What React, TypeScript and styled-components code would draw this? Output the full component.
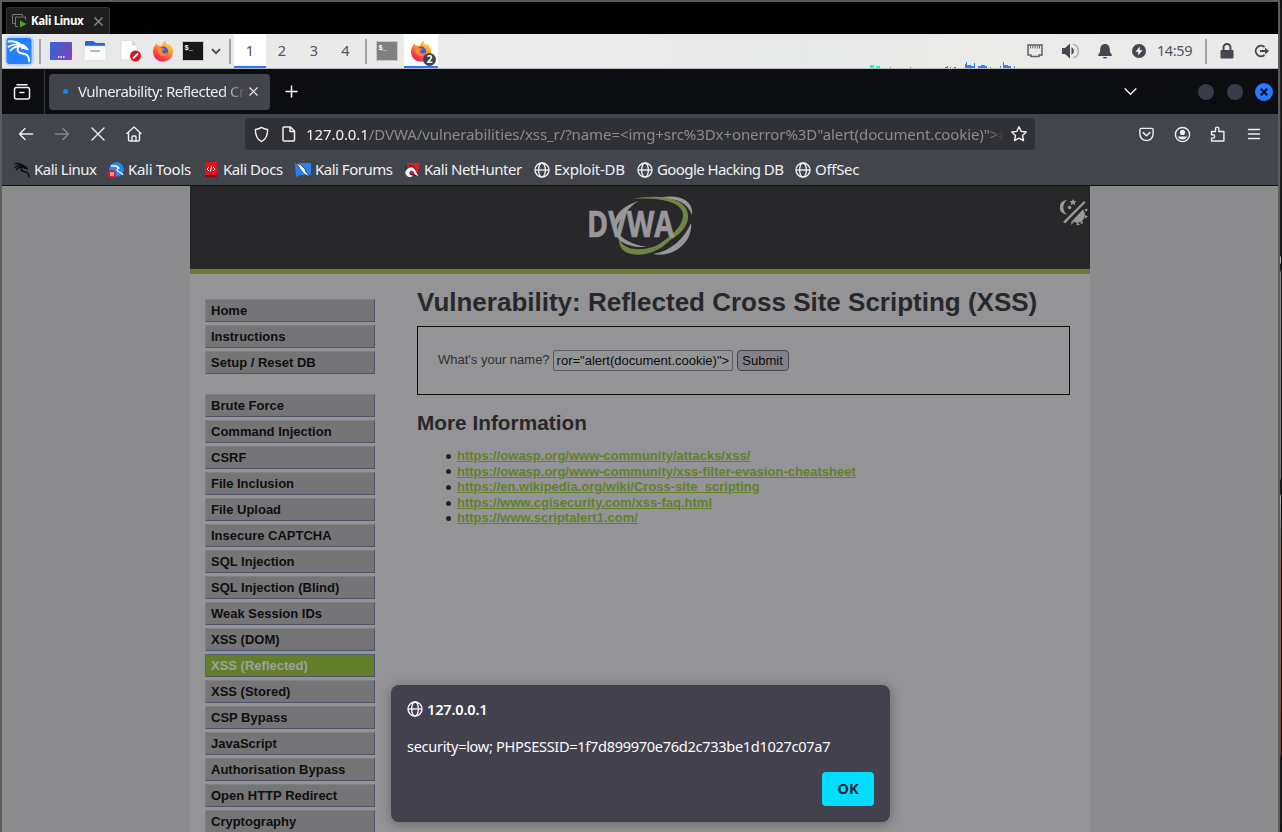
import React from "react";
import styled, { createGlobalStyle } from "styled-components";

const Global = createGlobalStyle`
  * { box-sizing: border-box; }
  html, body { margin: 0; padding: 0; background: #000; overflow: hidden; }
  svg { display: block; flex: none; }
`;

const ui = `"Noto Sans", "Open Sans", sans-serif`;
const web = `"Liberation Sans", Arial, sans-serif`;

const Screen = styled.div`
  width: 1282px; height: 832px; overflow: hidden; display: flex;
  background: #5c5c5c; font-family: ${ui}; padding: 2px 0 0 2px;
`;
const Desktop = styled.div`
  position: relative; width: 1276px; height: 830px; display: flex; flex-direction: column; overflow: hidden;
`;
const RightEdge = styled.div`
  width: 2px; margin: -2px 0 0 2px; height: 832px; border-right: 1px solid #111;
  background: linear-gradient(180deg, #1a1a1a 0, #2a2c28 120px, #1c1c1c 256px, #aaa 257px, #aaa 263px, #222 264px, #322 270px, #8a8a88 273px, #777 479px, #222 480px, #222 494px, #b0b0ae 496px, #777468 535px, #8a5a3c 575px, #8a5a3c 660px, #6e3f28 755px, #222 757px, #1b1b1b 832px);
`;

/* virtual machine tab strip */
const VmBar = styled.div`
  height: 32px; background: #000; display: flex; align-items: flex-end; padding-left: 4px; flex: none;
`;
const VmTab = styled.div`
  width: 104px; height: 27px; background: #1f1f1f; border: 1px solid #333; border-bottom: 0; border-radius: 3px 3px 0 0;
  display: flex; align-items: center; color: #fff; font-weight: 700; padding-left: 5px;
`;
const VmTitle = styled.span`
  font-size: 11.5px; letter-spacing: -0.35px; margin-left: 3px; width: 63px; white-space: nowrap; padding-bottom: 1px;
`;

/* desktop panel */
const Panel = styled.div`
  height: 35px; background: linear-gradient(90deg, #e8e8ea 0%, #ebebea 45%, #e6e9e8 63%, #ebebe8 75%, #e9e9ea 100%);
  border-bottom: 1px solid #b9b9bb; display: flex; flex: none; color: #50545d;
`;
const Slot = styled.div<{ $w: number; $active?: boolean }>`
  width: ${p => p.$w}px; height: 34px; flex: none; display: flex; align-items: center; justify-content: center;
  position: relative; background: ${p => (p.$active ? "#fff" : "transparent")};
  border-bottom: ${p => (p.$active ? "2px solid #2777ff" : "0")}; padding-top: ${p => (p.$active ? 2 : 0)}px;
  font-size: 15px; white-space: nowrap;
`;
const PanelText = styled.span<{ $ls?: number }>`
  font-size: 14.5px; line-height: 20px; padding-bottom: 2px; letter-spacing: ${p => p.$ls ?? 0}px;
`;
const PanelRule = styled.i`width: 2px; height: 25px; background: #a3a3a8;`;
const Spacer = styled.div<{ $w?: number }>`
  ${p => (p.$w ? `width: ${p.$w}px; flex: none;` : "flex: 1;")}
`;
const GraphSlot = styled.div`width: 146px; display: flex; align-items: flex-end;`;
const Badge = styled.span`
  position: absolute; right: 2px; bottom: 0; width: 13px; height: 13px; border-radius: 50%; background: #3c4452;
  color: #fff; font-size: 10px; line-height: 13px; font-weight: 700; text-align: center;
`;

/* browser chrome */
const TabBar = styled.div`
  height: 45px; background: #0c0d11; display: flex; align-items: center; flex: none; color: #f0f0f2;
`;
const ViewCell = styled.div`
  width: 43px; height: 44px; border-right: 1px solid #37393e; display: flex; align-items: center; justify-content: center; padding-right: 2px;
`;
const Tab = styled.div`
  width: 221px; height: 36px; margin: 0 0 0 4px; border-radius: 4px; background: #42444c; display: flex; align-items: center; padding-left: 14px;
`;
const Dot = styled.i`width: 5px; height: 5px; border-radius: 50%; background: #0a84ff; margin-right: 10px;`;
const TabTitle = styled.span`
  width: 168px; overflow: hidden; white-space: nowrap; font-size: 15px; letter-spacing: -0.53px; color: #ececee; padding-bottom: 2px;
  mask-image: linear-gradient(90deg, #000 86%, transparent 100%);
`;
const WinButton = styled.i<{ $close?: boolean }>`
  width: ${p => (p.$close ? 18 : 16)}px; height: ${p => (p.$close ? 18 : 16)}px; border-radius: 50%;
  background: ${p => (p.$close ? "#2777ff" : "#363c4a")}; display: flex; align-items: center; justify-content: center;
`;
const WinButtons = styled.div`
  display: flex; align-items: center; gap: 12px; width: 80px;
  & > :nth-child(2) { margin-left: 1px; }
`;
const NavBar = styled.div`
  height: 40px; background: #43454d; display: flex; align-items: center; flex: none; color: #eeeef0;
`;
const UrlBar = styled.div`
  width: 790px; height: 32px; border-radius: 4px; background: #303136; display: flex; align-items: center; padding-left: 8px;
`;
const UrlText = styled.div`
  width: 698px; margin-left: 8px; overflow: hidden; white-space: nowrap; font-size: 15px; color: #8b8c90; letter-spacing: -0.085px;
  mask-image: linear-gradient(90deg, #000 97.8%, transparent 100%);
`;
const Host = styled.span`color: #f3f3f5;`;
const Bookmarks = styled.div`
  height: 32px; background: #43454d; border-bottom: 1px solid #101114; display: flex; align-items: center; flex: none; color: #f0f0f2;
  padding: 0 0 0 12px;
`;
const Bookmark = styled.div<{ $w: number }>`
  width: ${p => p.$w}px; flex: none; display: flex; align-items: center; gap: 4px; font-size: 15px;
`;
const BookmarkName = styled.span<{ $ls: number }>`
  white-space: nowrap; line-height: 20px; padding-bottom: 2px; letter-spacing: ${p => p.$ls}px;
`;

/* DVWA page */
const Page = styled.div`
  flex: 1; min-height: 0; background: #8c8c8e; font-family: ${web}; font-size: 13px; display: flex; justify-content: center;
`;
const Container = styled.div`width: 900px; background: #949496; display: flex; flex-direction: column; color: #28282a; height: 646px; overflow: hidden;`;
const Header = styled.header`
  height: 88px; flex: none; background: #28282a; border-bottom: 5px solid #687f2b; display: flex; justify-content: flex-end; padding: 8px 2px 0 0;
`;
const LogoSlot = styled.div`width: 108px; margin-right: 358px;`;
const ThemeSlot = styled.div`padding: 2px 0 0 7px;`;
const Columns = styled.div`display: flex; padding-left: 15px;`;
const Menu = styled.nav`width: 170px; padding-top: 25px; flex: none;`;
const MenuGroup = styled.div`display: flex; flex-direction: column; gap: 3px; margin-bottom: 20px;`;
const MenuItem = styled.div<{ $active?: boolean }>`
  height: 23px; line-height: 21px; padding-left: 5px; font-weight: 700; font-size: 13px; flex: none;
  color: ${p => (p.$active ? "#a0a1a0" : "#0f0f10")};
  background: ${p => (p.$active ? "#627f2b" : "#757577")};
  border: 1px solid ${p => (p.$active ? "#536478" : "#808183")};
  border-right-color: #4f546b; border-bottom-color: #4f546b;
`;
const Main = styled.main`width: 653px; margin-left: 42px; padding-top: 13px;`;
const H1 = styled.h1`margin: 0; font-size: 26px; line-height: 30px; white-space: nowrap;`;
const H2 = styled.h2`margin: 16px 0 0; font-size: 20.8px; line-height: 24px;`;
const Form = styled.div`
  margin-top: 9px; height: 69px; border: 1px solid #0e0e0f; display: flex; align-items: center; padding-left: 20px; color: #303032; white-space: nowrap;
`;
const Prompt = styled.span`padding-bottom: 2px;`;
const Field = styled.div`
  width: 180px; height: 21px; margin-left: 3px; border: 1px solid #5a5a66; border-radius: 2px; background: #949496; color: #0c0c0d;
  padding-left: 3px; font-size: 13px; line-height: 20px; overflow: hidden;
`;
const Submit = styled.div`
  width: 52px; height: 21px; margin-left: 4px; border: 1px solid #47464f; border-radius: 4px; background: #828189; color: #0c0c0d;
  font-size: 13px; line-height: 20px; text-align: center;
`;
const Links = styled.ul`margin: 13px 0 0; padding: 0 0 0 29px; line-height: 15.6px; list-style: none;`;
const LinkRow = styled.li`
  display: flex; align-items: center;
  &::before { content: ""; width: 5px; height: 5px; border-radius: 50%; background: #232325; margin: 1px 6px 0 0; }
`;
const Link = styled.a`color: #627f2b; font-weight: 700; text-decoration: underline;`;

const Dialog = styled.div`
  position: absolute; left: 389px; top: 683px; width: 499px; height: 137px; border-radius: 8px; background: #42414d; color: #fbfbfe;
  box-shadow: 0 2px 12px rgba(20, 20, 26, .35); padding: 14px 16px 16px; display: flex; flex-direction: column; font-size: 15px;
`;
const DialogTitle = styled.div`display: flex; align-items: center; gap: 4px; font-weight: 600; font-size: 14.6px; line-height: 20px; letter-spacing: -0.2px;`;
const DialogText = styled.div`margin-top: 17px; line-height: 20px; white-space: nowrap; font-size: 14.6px; letter-spacing: -0.325px;`;
const Ok = styled.div`
  margin: auto 0 0 auto; width: 52px; height: 34px; border-radius: 4px; background: #00ddff; color: #2b2a33; font-weight: 700;
  line-height: 32px; text-align: center; font-size: 14.5px;
`;

const Stroke = ({ d, w = 18, sw = 1.5, color = "currentColor", fill = "none" }: { d: string; w?: number; sw?: number; color?: string; fill?: string }) => (
  <svg width={w} height={w} viewBox="0 0 18 18" fill={fill} stroke={color} strokeWidth={sw} strokeLinecap="round" strokeLinejoin="round"><path d={d} /></svg>
);

const Dragon = ({ size, color, sw = 1.6 }: { size: number; color: string; sw?: number }) => (
  <svg width={size} height={size} viewBox="0 0 24 24" fill="none" stroke={color} strokeWidth={sw} strokeLinecap="round" strokeLinejoin="round">
    <path d="M1.5 2.500C6 1.800 10 2.600 13.500 5.200M1.500 7.800C5 5.400 9.500 4.800 14 6M3.500 11.500C6 8.500 10 7 14.500 7" />
    <path d="M13 5.200l3.500.8 2.400 1.800 2.200 3-3.400-1.200-3-.4z" fill={color} strokeWidth="1.200" />
    <path d="M13.300 6.500C10.200 8.400 9.600 11.600 12 13.400c2.400 1.500 5.700.7 8.200 2.800 1.800 1.700 2.100 3.800 2.100 6.200M20 16c-1.200-.8-2.800-1.200-4.200-1.200" />
  </svg>
);

const Firefox = ({ size = 22 }: { size?: number }) => (
  <svg width={size} height={size} viewBox="0 0 24 24">
    <defs>
      <linearGradient id="ffBody" x1=".8" y1="0" x2=".25" y2="1">
        <stop offset="0" stopColor="#ffe34b" /><stop offset=".4" stopColor="#ff9a2e" /><stop offset=".72" stopColor="#ff453f" /><stop offset="1" stopColor="#df1b72" />
      </linearGradient>
    </defs>
    <path d="M3 6.500C3.600 5.300 4.400 4.200 5.200 3.500c0 1 .3 1.900 1 2.600 1.600-.3 3.200 0 4.600.8C11.200 4 12.700 2 14.700.6c.1 2.500 1.300 3.800 3.100 5.100.3-.8.3-1.300.2-2 3.200 2.200 5 5.400 5 9A11 11 0 0 1 1 12.900c0-2.400.7-4.600 2-6.400z" fill="url(#ffBody)" />
    <circle cx="12.300" cy="12.400" r="5.300" fill="#485bd3" />
    <path d="M5.500 8.200c1.600-1 4-.5 5.500 1l3 .2c-.4 1.500-2 1.700-3.100 2.300-.3 1.600.9 3 2.700 3.200 1.800.1 2.800-1.100 3.500-1.600-.5 3-3.100 4.600-5.700 4.300-3.400-.4-6-3.400-5.900-9.400z" fill="#ff852f" />
  </svg>
);

const Terminal = ({ bg }: { bg: string }) => (
  <svg width="22" height="20" viewBox="0 0 22 20">
    <rect x=".5" y=".5" width="21" height="19" fill={bg} stroke="#c8c8c8" />
    <text x="2.500" y="8.500" fill="#fff" fontSize="7" fontWeight="700" fontFamily="Liberation Mono, monospace">$_</text>
  </svg>
);

const Globe = ({ s = 16 }: { s?: number }) => (
  <svg width={s} height={s} viewBox="0 0 16 16" fill="none" stroke="currentColor" strokeWidth="1.350">
    <circle cx="8" cy="8" r="7" /><ellipse cx="8" cy="8" rx="3.400" ry="7" /><path d="M1 8h14" />
  </svg>
);

const bars: [number, number, number, string][] = [
  [0, 3, 4, "#19f5d8"], [6, 2, 4, "#19f5d8"], [20, 1, 1, "#2c84f5"], [40, 1, 1, "#2c84f5"], [75, 1, 3, "#2c84f5"], [77, 2, 1, "#2c84f5"],
  [80, 1, 1, "#2c84f5"], [84, 1, 2, "#2c84f5"], [95, 4, 2, "#2c84f5"], [96, 6, 1, "#2c84f5"], [97, 3, 4, "#2c84f5"], [101, 2, 3, "#2c84f5"],
  [104, 5, 1, "#2c84f5"], [108, 2, 3, "#2c84f5"], [111, 3, 4, "#2c84f5"], [114, 2, 3, "#2c84f5"], [120, 1, 1, "#2c84f5"],
  [130, 2, 1, "#2c84f5"], [133, 6, 1, "#2c84f5"], [134, 3, 4, "#2c84f5"], [138, 2, 3, "#2c84f5"], [144, 2, 1, "#2c84f5"],
];

const DvwaLogo = () => (
  <svg width="108" height="64" viewBox="0 0 108 64">
    <path d="M67 5C88-1 107 4 105 21C100 7 86 3 67 5z" fill="#98989b" />
    <path d="M45 5C76-1 103 5 101 24C99 40 82 47 68 53C83 43 96 33 96 21C96 8 72 3 45 5z" fill="#718542" />
    <path d="M104 29C106 47 88 64 66 60C84 57 97 45 104 29z" fill="#98989b" />
    <path d="M52 7C18 17 19 46 60 53C30 54 20 39 37 21C41 15 46 10 52 7z" fill="#98989b" />
    <path d="M32 43C34 60 68 59 87 41C71 66 29 68 32 43z" fill="#718542" />
    <text x="0" y="43" textLength="87" lengthAdjust="spacingAndGlyphs" fontFamily="Open Sans, sans-serif" fontWeight="700" fontSize="35" fill="#98989b" stroke="#98989b" strokeWidth=".7">DVWA</text>
  </svg>
);

const ThemeIcon = () => (
  <svg width="28" height="31" viewBox="0 0 28 31" fill="#99999b">
    <path d="M7 4A7 7 0 0 0 7 18.500A9 9 0 0 1 7 4zM13 3l1 2 2.500.2-1.800 1.700.5 2.400-2.200-1.200-2.100 1.200.4-2.400L9.500 5.200 12 5zM9.500 9l.8 1.400 1.700.3-1.200 1.200.2 1.700-1.500-.8-1.500.8.3-1.700L7 10.700l1.700-.3z" />
    <path d="M24 5l1.600 1.600L5 27.500l-1.800-1.800z" />
    <path d="M23 13.500A8 8 0 0 1 12 25z" />
    <path d="M24.500 13h3.500l-2 3zM25 19l3 1.500-3 2zM21 24l2.500 3-3 1zM11 25.500h3l-2.500 3.500zM17 25.800l3 3.200h-3.500z" />
  </svg>
);

const first = ["Home", "Instructions", "Setup / Reset DB"];
const second = ["Brute Force", "Command Injection", "CSRF", "File Inclusion", "File Upload", "Insecure CAPTCHA", "SQL Injection", "SQL Injection (Blind)", "Weak Session IDs", "XSS (DOM)", "XSS (Reflected)", "XSS (Stored)", "CSP Bypass", "JavaScript", "Authorisation Bypass", "Open HTTP Redirect", "Cryptography"];
const links = ["https://owasp.org/www-community/attacks/xss/", "https://owasp.org/www-community/xss-filter-evasion-cheatsheet", "https://en.wikipedia.org/wiki/Cross-site_scripting", "https://www.cgisecurity.com/xss-faq.html", "https://www.scriptalert1.com/"];

export default function App() {
  return (
    <Screen>
      <Global />
      <Desktop>
        <VmBar>
          <VmTab>
            <svg width="16" height="16" viewBox="0 0 16 16" fill="none" stroke="#777"><path d="M3 10.500H.5v-9h10V3M6 13.500H3.500V4h10v3" /><path d="M8 7.500l6.500 3.500L8 14.500z" fill="#4ea61c" stroke="none" /></svg>
            <VmTitle>Kali Linux</VmTitle>
            <svg width="9" height="9" viewBox="0 0 9 9" stroke="#858585" strokeWidth="1.500"><path d="M.5.5l8 8M8.500.5l-8 8" /></svg>
          </VmTab>
        </VmBar>

        <Panel>
          <Slot $w={35}>
            <svg width="30" height="30" viewBox="0 0 30 30">
              <rect x="0" y="0" width="29" height="30" rx="6" fill="#9cc4ff" opacity=".6" />
              <rect x="1.500" y="2" width="25" height="26" rx="3" fill="#2580ff" />
              <svg x="2" y="3" width="25" height="25" viewBox="0 0 25 25"><Dragon size={24} color="#fff" sw={1.900} /></svg>
            </svg>
          </Slot>
          <Slot $w={6}><PanelRule /></Slot>
          <Slot $w={36}>
            <svg width="22" height="18" viewBox="0 0 22 18">
              <defs><linearGradient id="desk" x2="1" y2=".3"><stop stopColor="#2f66d8" /><stop offset="1" stopColor="#7646bd" /></linearGradient></defs>
              <rect width="22" height="18" rx="1" fill="url(#desk)" /><path d="M8 15h1.500M10.500 15H12M13 15h1.500" stroke="#fff" strokeWidth="1.300" />
            </svg>
          </Slot>
          <Slot $w={32}>
            <svg width="24" height="22" viewBox="0 0 24 22"><path d="M2 2q0-1 1-1h7l3 2h8q1 0 1 1v5H2z" fill="#2368d5" /><rect x="1" y="6" width="22" height="14.500" rx="1" fill="#fbfbfc" stroke="#d5d5d8" strokeWidth=".6" /><path d="M8 11h8" stroke="#b5b5b8" strokeWidth="2" strokeLinecap="round" /></svg>
          </Slot>
          <Slot $w={39}>
            <svg width="22" height="24" viewBox="0 0 22 24"><path d="M1 1.500h11l5 5V21H1z" fill="#fdfdfd" stroke="#d4d4d4" strokeWidth=".6" /><path d="M12 1.500v5h5z" fill="#d6d6d6" /><circle cx="15.500" cy="17" r="5.500" fill="#d51a20" /><path d="M13.500 19l4-4" stroke="#fff" strokeWidth="1.800" strokeLinecap="round" /></svg>
          </Slot>
          <Slot $w={25}><Firefox /></Slot>
          <Slot $w={36}><Terminal bg="#171717" /></Slot>
          <Slot $w={10}><svg width="10" height="7" viewBox="0 0 10 7" fill="none" stroke="#434750" strokeWidth="1.800"><path d="M1 1.200l4 4 4-4" /></svg></Slot>
          <Spacer $w={5} />
          <Slot $w={8}><PanelRule /></Slot>
          <Slot $w={32} $active><PanelText>1</PanelText></Slot>
          <Slot $w={32}><PanelText>2</PanelText></Slot>
          <Slot $w={32}><PanelText>3</PanelText></Slot>
          <Slot $w={31}><PanelText>4</PanelText></Slot>
          <Slot $w={10}><PanelRule /></Slot>
          <Slot $w={32}><Terminal bg="#808080" /></Slot>
          <Spacer $w={1} />
          <Slot $w={34} $active><Firefox /><Badge>2</Badge></Slot>
          <Spacer $w={432} />
          <GraphSlot>
            <svg width="146" height="8" shapeRendering="crispEdges">
              {bars.map(([x, h, w, c]) => <rect key={x} x={x} y={8 - h} width={w} height={h} fill={c} />)}
            </svg>
          </GraphSlot>
          <Slot $w={38}><svg width="16" height="14" viewBox="0 0 16 14" fill="none" stroke="#5d626c" strokeWidth="1.500"><path d="M1 1h14v10h-3v1.500H4V11H1z" /><path d="M3.500 1.500v3M5.800 1.500v3M8 1.500v3M10.300 1.500v3M12.500 1.500v3" strokeWidth="1" /></svg></Slot>
          <Slot $w={32}><svg width="18" height="16" viewBox="0 0 18 16"><path d="M1 5h3l5-4.500v15L4 11H1z" fill="#434750" /><path d="M10.500 4v8a4.500 4.500 0 0 0 0-8z" fill="#434750" /><path d="M12 1.200a7 7 0 0 1 0 13.600" fill="none" stroke="#b2b4b8" strokeWidth="1.600" /></svg></Slot>
          <Spacer $w={1} />
          <Slot $w={36}><svg width="14" height="16" viewBox="0 0 14 16" fill="#434750"><path d="M7 1C3.800 1 2.300 3.500 2.300 6c0 3-.8 4.300-2 5.500V13h13.400v-1.500c-1.200-1.200-2-2.500-2-5.500 0-2.500-1.500-5-4.700-5zM5 14a2 1.500 0 0 0 4 0z" /></svg></Slot>
          <Slot $w={32}><svg width="14" height="14" viewBox="0 0 14 14"><circle cx="7" cy="7" r="7" fill="#434750" /><path d="M8 2.500L3.500 7.800h3L6 11.500l4.500-5.300h-3z" fill="#fff" /></svg></Slot>
          <Slot $w={39}><PanelText $ls={-0.4}>14:59</PanelText></Slot>
          <Slot $w={24}><PanelRule /></Slot>
          <Slot $w={18}><svg width="14" height="16" viewBox="0 0 14 16"><rect x=".5" y="7" width="13" height="8.500" rx="1" fill="#434750" /><path d="M3.500 7V4.500a3.500 3.500 0 0 1 7 0V7" fill="none" stroke="#434750" strokeWidth="2" /></svg></Slot>
          <Spacer $w={8} />
          <Slot $w={34}><svg width="15" height="14" viewBox="0 0 15 14" fill="none" stroke="#434750" strokeWidth="1.900"><path d="M10.500 3A5.300 5.300 0 1 0 10.500 11M6 7h6" /><path d="M11 3.500l4 3.500-4 3.500z" fill="#434750" stroke="none" /></svg></Slot>
        </Panel>

        <TabBar>
          <ViewCell>
            <svg width="18" height="18" viewBox="0 0 18 18" fill="none" stroke="currentColor" strokeWidth="1.500" strokeLinecap="round"><path d="M4 1.800h10" /><rect x="1.500" y="4.500" width="15" height="11.500" rx="2" /><path d="M7 9.500h4" /></svg>
          </ViewCell>
          <Tab>
            <Dot />
            <TabTitle>Vulnerability: Reflected Cr</TabTitle>
            <Spacer $w={3} />
            <svg width="9" height="9" viewBox="0 0 9 9" stroke="#eee" strokeWidth="1.200"><path d="M.5.5l8 8M8.500.5l-8 8" /></svg>
          </Tab>
          <Slot $w={43}><svg width="13" height="13" viewBox="0 0 13 13" stroke="#fff" strokeWidth="1.500"><path d="M6.500 0.500v12M.5 6.500h12" /></svg></Slot>
          <Spacer />
          <svg width="13" height="8" viewBox="0 0 13 8" fill="none" stroke="#eee" strokeWidth="1.500"><path d="M.7 .5l5.800 5.800L12.300 .5" /></svg>
          <Spacer $w={61} />
          <WinButtons>
            <WinButton /><WinButton />
            <WinButton $close><svg width="8" height="8" viewBox="0 0 8 8" stroke="#10131a" strokeWidth="2"><path d="M.8.8l6.400 6.400M7.200.8L.8 7.200" /></svg></WinButton>
          </WinButtons>
        </TabBar>

        <NavBar>
          <Spacer $w={6} />
          <Slot $w={36}><Stroke d="M15.500 9H2.500M8 3.500L2.500 9 8 14.500" /></Slot>
          <Slot $w={36}><Stroke d="M2.500 9h13M10 3.500L15.500 9 10 14.500" color="#85868c" /></Slot>
          <Slot $w={36}><Stroke d="M3 3l12 12M15 3L3 15" sw={1.400} /></Slot>
          <Slot $w={35}><Stroke d="M2 8.500L9 2l7 6.500M3.500 7.500v7q0 1.500 1.500 1.500h8q1.500 0 1.500-1.500v-7M7 16v-4q0-1 1-1h2q1 0 1 1v4" sw={1.400} /></Slot>
          <Spacer $w={94} />
          <UrlBar>
            <Stroke d="M9 1.500c2 1.500 4 2 6.500 2.200 0 6-1.300 10.300-6.500 12.800C3.800 14 2.500 9.700 2.500 3.700 5 3.500 7 3 9 1.500z" w={17} />
            <Spacer $w={10} />
            <Stroke d="M4 2h6.500L14.500 6v9q0 1-1 1h-9.500q-1 0-1-1V3q0-1 1-1zM10 2.200v4.300h4.300" w={18} />
            <UrlText><Host>127.0.0.1</Host>/DVWA/vulnerabilities/xss_r/?name=&lt;img+src%3Dx+onerror%3D"alert(document.cookie)"&gt;#</UrlText>
            <Spacer $w={6} />
            <Stroke d="M9 1.700l2.200 4.700 5.100.6-3.800 3.500 1 5.100L9 13.100l-4.500 2.500 1-5.100L1.700 7l5.100-.6z" w={18} sw={1.400} />
          </UrlBar>
          <Spacer />
          <Slot $w={36}><Stroke d="M3.500 2.500h11q1.500 0 1.500 1.500v4.500a7 7 0 0 1-14 0V4q0-1.500 1.500-1.500zM5.500 7L9 10.300 12.500 7" w={17} /></Slot>
          <Slot $w={36}>
            <svg width="17" height="17" viewBox="0 0 18 18"><circle cx="9" cy="9" r="7.500" fill="none" stroke="currentColor" strokeWidth="1.500" /><circle cx="9" cy="6.800" r="2.700" fill="currentColor" /><path d="M4 11h10c-.8 2-2.500 3.200-5 3.200S4.800 13 4 11z" fill="currentColor" /></svg>
          </Slot>
          <Slot $w={36}><Stroke d="M2.500 6.500h4V3.800a1.700 1.700 0 0 1 3.400 0v2.700h5v9.500H2.500v-2.900H4a1.700 1.700 0 0 0 0-3.400H2.500z" w={18} sw={1.400} /></Slot>
          <Slot $w={36}><Stroke d="M3.500 4.500h11M3.500 9h11M3.500 13.500h11" w={18} sw={1.400} /></Slot>
          <Spacer $w={6} />
        </NavBar>

        <Bookmarks>
          <Bookmark $w={94}><Dragon size={16} color="#0b0b0c" sw={2} /><BookmarkName $ls={-0.5}>Kali Linux</BookmarkName></Bookmark>
          <Bookmark $w={95}>
            <svg width="16" height="16" viewBox="0 0 16 16"><circle cx="8.500" cy="7.500" r="7.300" fill="#2a86e8" /><path d="M3 4q5-1 8 2-4 2 0 4 3 1 4 3" fill="none" stroke="#fff" strokeWidth="1.300" /><circle cx="4" cy="12" r="4" fill="#e01b1b" /><path d="M3 10v4M5 10v4" stroke="#fff" /></svg>
            <BookmarkName $ls={-0.3}>Kali Tools</BookmarkName>
          </Bookmark>
          <Bookmark $w={92}>
            <svg width="16" height="16" viewBox="0 0 16 16"><rect x="2" y="0" width="12" height="15.500" rx="1" fill="#d9151b" /><path d="M2 13h12v2.500H2z" fill="#7c1016" /><path d="M6 5L4 7l2 2M10 5l2 2-2 2M8.700 4.500l-1.400 5" stroke="#fff" fill="none" /></svg>
            <BookmarkName $ls={-0.45}>Kali Docs</BookmarkName>
          </Bookmark>
          <Bookmark $w={109}>
            <svg width="16" height="16" viewBox="0 0 16 16"><path d="M0 1h16v12H5l-4 2z" fill="#2783ef" /><path d="M1 1l5 2 4 4 1 3 4 5-6-3-4-5z" fill="#f4f4f4" stroke="#182334" strokeWidth=".7" /></svg>
            <BookmarkName $ls={-0.5}>Kali Forums</BookmarkName>
          </Bookmark>
          <Bookmark $w={130}>
            <svg width="16" height="16" viewBox="0 0 16 16"><path d="M3 1h13l-3 12H7z" fill="#d6202c" /><path d="M2 4Q1 8 3 10.500L12.500 14M5 3.500q5 0 6.500 5" fill="none" stroke="#182334" strokeWidth="1" /><path d="M1 11.500Q2 5.500 7.500 5.500q3 0 4.500 4.500l2.500 4.500-4-2.500q0-3-3-3.500-2.500.5-2 3.500 1.500 2 3.500 1.500-1.500 2-4 1.500-2.500-.5-3.500-3.500z" fill="#f4f4f4" /></svg>
            <BookmarkName $ls={-0.47}>Kali NetHunter</BookmarkName>
          </Bookmark>
          <Bookmark $w={103}><Globe /><BookmarkName $ls={-0.25}>Exploit-DB</BookmarkName></Bookmark>
          <Bookmark $w={158}><Globe /><BookmarkName $ls={-0.58}>Google Hacking DB</BookmarkName></Bookmark>
          <Bookmark $w={90}><Globe /><BookmarkName $ls={-0.3}>OffSec</BookmarkName></Bookmark>
        </Bookmarks>

        <Page>
          <Container>
            <Header><LogoSlot><DvwaLogo /></LogoSlot><ThemeSlot><ThemeIcon /></ThemeSlot></Header>
            <Columns>
              <Menu>
                <MenuGroup>{first.map(t => <MenuItem key={t}>{t}</MenuItem>)}</MenuGroup>
                <MenuGroup>{second.map(t => <MenuItem key={t} $active={t === "XSS (Reflected)"}>{t}</MenuItem>)}</MenuGroup>
              </Menu>
              <Main>
                <H1>Vulnerability: Reflected Cross Site Scripting (XSS)</H1>
                <Form><Prompt>What's your name?</Prompt><Field>ror="alert(document.cookie)"&gt;</Field><Submit>Submit</Submit></Form>
                <H2>More Information</H2>
                <Links>{links.map(l => <LinkRow key={l}><Link>{l}</Link></LinkRow>)}</Links>
              </Main>
            </Columns>
          </Container>
        </Page>

        <Dialog>
          <DialogTitle><Globe s={16} />127.0.0.1</DialogTitle>
          <DialogText>security=low; PHPSESSID=1f7d899970e76d2c733be1d1027c07a7</DialogText>
          <Ok>OK</Ok>
        </Dialog>
      </Desktop>
      <RightEdge />
    </Screen>
  );
}
